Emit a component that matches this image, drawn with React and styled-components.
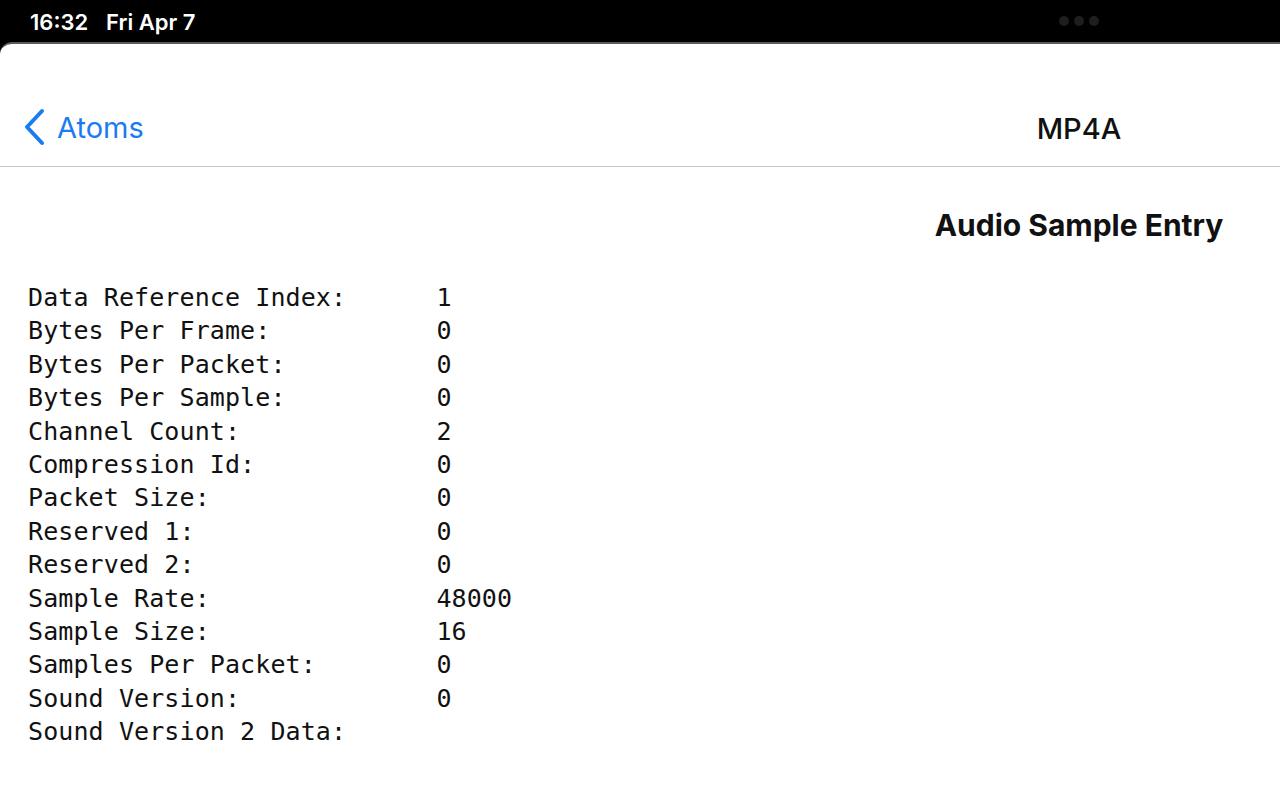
import React from 'react';
import styled, { createGlobalStyle } from 'styled-components';

const GlobalStyle = createGlobalStyle`
  html, body {
    margin: 0;
    padding: 0;
    background: #000;
    width: 1280px;
    height: 810px;
    overflow: hidden;
  }
  * { box-sizing: border-box; }
`;

const Screen = styled.div`
  display: flex;
  flex-direction: column;
  width: 1280px;
  height: 810px;
  background: #000;
`;

const StatusBar = styled.div`
  height: 42px;
  display: grid;
  grid-template-columns: 1fr 402px;
  align-items: center;
  padding-left: 30px;
  color: #fff;
  font-family: Inter, "Noto Sans", sans-serif;
  font-size: 22px;
  font-weight: 600;
`;

const StatusLeft = styled.div`
  display: flex;
  gap: 18px;
  padding-top: 1px;
`;

const Dots = styled.div`
  display: flex;
  justify-content: center;
  gap: 5px;
`;

const Dot = styled.span`
  width: 10px;
  height: 10px;
  border-radius: 50%;
  background: #1e1e1e;
`;

const Sheet = styled.div`
  flex: 1;
  background: #fff;
  border-top: 2px solid #5a5a5a;
  border-top-left-radius: 12px;
  display: flex;
  flex-direction: column;
`;

const NavBar = styled.div`
  height: 123px;
  display: grid;
  grid-template-columns: 1fr 402px;
  align-items: end;
  padding-bottom: 20px;
  border-bottom: 1px solid #c6c6c8;
  font-family: Inter, "Noto Sans", sans-serif;
`;

const BackButton = styled.div`
  display: flex;
  align-items: center;
  gap: 11px;
  padding-left: 22px;
  color: #1a7cf0;
  font-size: 29px;
`;

const Title = styled.div`
  text-align: center;
  font-size: 29px;
  font-weight: 500;
  color: #111;
`;

const Content = styled.div`
  display: flex;
  flex-direction: column;
  padding: 40px 0 0 28px;
`;

const HeadingRow = styled.div`
  display: grid;
  grid-template-columns: 1fr 402px;
  margin-left: -28px;
  margin-bottom: 38px;
`;

const Heading = styled.h2`
  grid-column: 2;
  margin: 0;
  text-align: center;
  font-family: Inter, "Noto Sans", sans-serif;
  font-size: 30px;
  font-weight: 700;
  color: #111;
`;

const Fields = styled.div`
  display: grid;
  grid-template-columns: calc(27ch + 2px) auto;
  justify-content: start;
  font-family: "DejaVu Sans Mono", "Liberation Mono", monospace;
  font-size: 25px;
  letter-spacing: 0.1px;
  line-height: 33.4px;
  color: #111;
`;

const Label = styled.span`
  white-space: pre;
`;

const Value = styled.span`
  white-space: pre;
`;

const Chevron = () => (
  <svg width="24" height="38" viewBox="0 0 24 38" fill="none">
    <path d="M20 3 L5 19 L20 35" stroke="#1a7cf0" strokeWidth="4" strokeLinecap="round" strokeLinejoin="round" />
  </svg>
);

const fields = [
  ['Data Reference Index:', '1'],
  ['Bytes Per Frame:', '0'],
  ['Bytes Per Packet:', '0'],
  ['Bytes Per Sample:', '0'],
  ['Channel Count:', '2'],
  ['Compression Id:', '0'],
  ['Packet Size:', '0'],
  ['Reserved 1:', '0'],
  ['Reserved 2:', '0'],
  ['Sample Rate:', '48000'],
  ['Sample Size:', '16'],
  ['Samples Per Packet:', '0'],
  ['Sound Version:', '0'],
  ['Sound Version 2 Data:', ''],
];

const App = () => {
  return (
    <Screen>
      <GlobalStyle />
      <StatusBar>
        <StatusLeft>
          <span>16:32</span>
          <span>Fri Apr 7</span>
        </StatusLeft>
        <Dots>
          <Dot />
          <Dot />
          <Dot />
        </Dots>
      </StatusBar>
      <Sheet>
        <NavBar>
          <BackButton>
            <Chevron />
            <span>Atoms</span>
          </BackButton>
          <Title>MP4A</Title>
        </NavBar>
        <Content>
          <HeadingRow>
            <Heading>Audio Sample Entry</Heading>
          </HeadingRow>
          <Fields>
            {fields.map(([label, value]) => (
              <React.Fragment key={label}>
                <Label>{label}</Label>
                <Value>{value}</Value>
              </React.Fragment>
            ))}
          </Fields>
        </Content>
      </Sheet>
    </Screen>
  );
};

export default App;
